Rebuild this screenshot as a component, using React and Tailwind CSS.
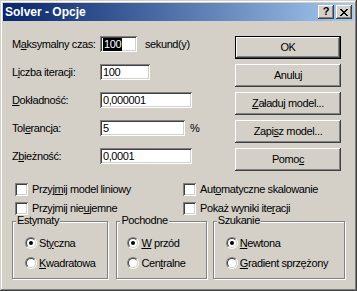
import React from "react";

const raised =
  "shadow-[inset_-1px_-1px_0_#404040,inset_1px_1px_0_#ffffff,inset_-2px_-2px_0_#808080,inset_2px_2px_0_#d4d0c8]";
const sunken =
  "shadow-[inset_1px_1px_0_#808080,inset_-1px_-1px_0_#ffffff,inset_2px_2px_0_#404040,inset_-2px_-2px_0_#d4d0c8]";

function Input({ w, children }) {
  return (
    <div className={`h-[16px] bg-white ${sunken} flex items-center pl-[3px] ${w}`}>
      {children}
    </div>
  );
}

function Btn({ children, def }) {
  return (
    <div
      className={`h-[23px] w-[106px] flex items-center justify-center bg-[#d4d0c8] ${
        def
          ? "shadow-[inset_0_0_0_1px_#000000,inset_-2px_-2px_0_#404040,inset_2px_2px_0_#ffffff,inset_-3px_-3px_0_#808080]"
          : raised
      }`}
    >
      {children}
    </div>
  );
}

function Check({ children }) {
  return (
    <div className="flex items-center h-[13px]">
      <span className={`w-[13px] h-[13px] bg-white ${sunken} shrink-0`} />
      <span className="ml-[4px] leading-none">{children}</span>
    </div>
  );
}

function Radio({ checked, children }) {
  return (
    <div className="flex items-center h-[12px]">
      <span className="w-[12px] h-[12px] rounded-full border border-t-[#808080] border-l-[#808080] border-r-white border-b-white shrink-0 flex">
        <span className="flex-1 rounded-full border border-t-[#404040] border-l-[#404040] border-r-[#d4d0c8] border-b-[#d4d0c8] bg-white flex items-center justify-center">
          {checked && <span className="w-[4px] h-[4px] rounded-full bg-black" />}
        </span>
      </span>
      <span className="ml-[2px] leading-none">{children}</span>
    </div>
  );
}

function Group({ title, w, pl, children }) {
  return (
    <div
      className={`relative h-[58px] ${w} border border-[#808080] shadow-[inset_1px_1px_0_#ffffff,1px_1px_0_#ffffff]`}
    >
      <span className="absolute left-[3px] top-[-7px] bg-[#d4d0c8] px-[1px] leading-none">
        {title}
      </span>
      <div className={`flex flex-col gap-[8px] pt-[15px] ${pl}`}>{children}</div>
    </div>
  );
}

export default function App() {
  return (
    <div
      className="w-[357px] h-[291px] bg-[#d4d0c8] p-[3px] text-[11px] text-black shadow-[inset_-1px_-1px_0_#404040,inset_1px_1px_0_#d4d0c8,inset_-2px_-2px_0_#808080,inset_2px_2px_0_#ffffff] flex flex-col"
      style={{ fontFamily: '"Liberation Sans", Arial, sans-serif' }}
    >
      {/* Title bar */}
      <div className="h-[18px] bg-linear-to-r from-[#0a246a] to-[#a6caf0] flex items-center pl-[2px] pr-[2px]">
        <span className="text-white font-bold text-[12px] leading-none">Solver - Opcje</span>
        <div className="ml-auto flex">
          <div className={`w-[16px] h-[14px] bg-[#d4d0c8] ${raised} flex items-center justify-center text-[11px] font-bold leading-none pb-[1px]`}>
            ?
          </div>
          <div className={`ml-[2px] w-[16px] h-[14px] bg-[#d4d0c8] ${raised} flex items-center justify-center`}>
            <svg width="8" height="7" viewBox="0 0 8 7" shapeRendering="crispEdges">
              <path d="M0 0h2v1H0zM6 0h2v1H6zM1 1h2v1H1zM5 1h2v1H5zM2 2h4v1H2zM3 3h2v1H3zM2 4h4v1H2zM1 5h2v1H1zM5 5h2v1H5zM0 6h2v1H0zM6 6h2v1H6z" fill="#000" />
            </svg>
          </div>
        </div>
      </div>

      {/* Body */}
      <div className="flex flex-col px-[9px] tracking-[-0.4px]">
        <div className="mt-[15px] flex">
          <div className="w-[223px] flex flex-col gap-[12px]">
            <div className="flex items-center h-[16px]">
              <span className="w-[88px]">M<u>a</u>ksymalny czas:</span>
              <div className={`h-[16px] w-[37px] bg-white ${sunken} flex items-center pl-[3px]`}>
                <span className="bg-black text-white h-[13px] flex items-center px-[1px]">100</span>
              </div>
              <span className="ml-[8px]">sekund(y)</span>
            </div>
            <div className="flex items-center h-[16px]">
              <span className="w-[88px]">L<u>i</u>czba iteracji:</span>
              <Input w="w-[50px]">100</Input>
            </div>
            <div className="flex items-center h-[16px]">
              <span className="w-[88px]"><u>D</u>okładność:</span>
              <Input w="w-[92px]">0,000001</Input>
            </div>
            <div className="flex items-center h-[16px]">
              <span className="w-[88px]">Tol<u>e</u>rancja:</span>
              <Input w="w-[85px]">5</Input>
              <span className="ml-[5px]">%</span>
            </div>
            <div className="flex items-center h-[16px]">
              <span className="w-[88px]">Z<u>b</u>ieżność:</span>
              <Input w="w-[92px]">0,0001</Input>
            </div>
          </div>
          <div className="flex flex-col gap-[5px]">
            <Btn def>OK</Btn>
            <Btn>Anuluj</Btn>
            <Btn><span><u>Z</u>aładuj model...</span></Btn>
            <Btn><span>Zapi<u>s</u>z model...</span></Btn>
            <Btn><span>Pomo<u>c</u></span></Btn>
          </div>
        </div>

        <div className="mt-[12px] grid grid-cols-[168px_1fr] gap-y-[6px] pl-[3px]">
          <Check>Przyj<u>m</u>ij model liniowy</Check>
          <Check>Aut<u>o</u>matyczne skalowanie</Check>
          <Check>Przyjmij nie<u>u</u>jemne</Check>
          <Check>Pokaż wyniki ite<u>r</u>acji</Check>
        </div>

        <div className="mt-[6px] flex">
          <Group title="Estymaty" w="w-[97px]" pl="pl-[12px]">
            <Radio checked>St<u>y</u>czna</Radio>
            <Radio><u>K</u>wadratowa</Radio>
          </Group>
          <div className="w-[8px]" />
          <Group title="Pochodne" w="w-[91px]" pl="pl-[10px]">
            <Radio checked><u>W</u> przód</Radio>
            <Radio>Cen<u>t</u>ralne</Radio>
          </Group>
          <div className="w-[6px]" />
          <Group title="Szukanie" w="w-[133px]" pl="pl-[12px]">
            <Radio checked><u>N</u>ewtona</Radio>
            <Radio><u>G</u>radient sprzężony</Radio>
          </Group>
        </div>
      </div>
    </div>
  );
}
